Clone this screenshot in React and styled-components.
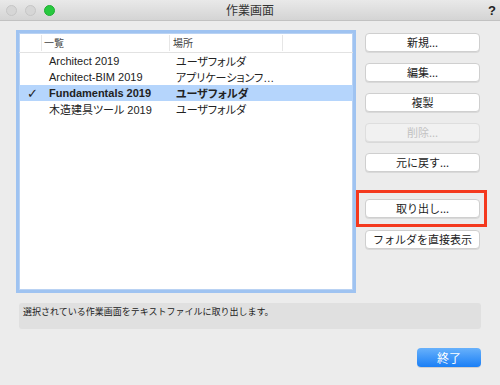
import React from 'react';
import styled, { createGlobalStyle } from 'styled-components';

const GlobalStyle = createGlobalStyle`
  html, body {
    margin: 0;
    padding: 0;
    background: #ececec;
  }
  body {
    font-family: 'Liberation Sans', 'Noto Sans CJK JP', sans-serif;
    color: #222;
  }
`;

const workspaces = [
  { name: 'Architect 2019', place: 'ユーザフォルダ' },
  { name: 'Architect-BIM 2019', place: 'アプリケーションフ…' },
  { name: 'Fundamentals 2019', place: 'ユーザフォルダ', selected: true },
  { name: '木造建具ツール 2019', place: 'ユーザフォルダ' },
];

const actions = [
  { label: '新規...' },
  { label: '編集...' },
  { label: '複製' },
  { label: '削除...', disabled: true },
  { label: '元に戻す...' },
];

const App = () => {
  return (
    <Window>
      <GlobalStyle />
      <TitleBar>
        <Lights>
          <Light />
          <Light />
          <Light color="#27c93f" border="#1fae33" />
        </Lights>
        <Title>作業画面</Title>
        <Help>?</Help>
      </TitleBar>

      <Body>
        <MainRow>
          <List>
            <HeaderRow>
              <CheckCell header />
              <NameCell header>一覧</NameCell>
              <PlaceCell header>場所</PlaceCell>
              <RestCell />
            </HeaderRow>
            {workspaces.map((item) => (
              <Row key={item.name} selected={item.selected}>
                <CheckCell>{item.selected ? '✓' : ''}</CheckCell>
                <NameCell>{item.name}</NameCell>
                <PlaceCell>{item.place}</PlaceCell>
              </Row>
            ))}
          </List>

          <Actions>
            {actions.map((a) => (
              <Button key={a.label} disabled={a.disabled}>
                {a.label}
              </Button>
            ))}
            <Highlight>
              <Button>取り出し...</Button>
            </Highlight>
            <Button>フォルダを直接表示</Button>
          </Actions>
        </MainRow>

        <Description>選択されている作業画面をテキストファイルに取り出します。</Description>

        <Footer>
          <PrimaryButton>終了</PrimaryButton>
        </Footer>
      </Body>
    </Window>
  );
};

export default App;

const Window = styled.div`
  width: 500px;
  height: 385px;
  display: flex;
  flex-direction: column;
  background: #ececec;
  overflow: hidden;
`;

const TitleBar = styled.div`
  height: 21px;
  flex: 0 0 21px;
  box-sizing: border-box;
  display: flex;
  align-items: center;
  position: relative;
  background: linear-gradient(#e9e9e9, #d4d4d4);
  border-bottom: 1px solid #c2c2c2;
`;

const Lights = styled.div`
  display: flex;
  gap: 8px;
  padding-left: 6px;
`;

const Light = styled.span`
  width: 11px;
  height: 11px;
  border-radius: 50%;
  box-sizing: border-box;
  background: ${(p) => p.color || '#d6d6d6'};
  border: 1px solid ${(p) => p.border || '#c6c6c6'};
`;

const Title = styled.div`
  position: absolute;
  left: 0;
  right: 0;
  text-align: center;
  font-family: 'Noto Sans CJK JP', sans-serif;
  font-size: 12px;
  line-height: 20px;
  color: #333;
  pointer-events: none;
`;

const Help = styled.div`
  margin-left: auto;
  margin-right: 4px;
  font-family: 'Liberation Sans', sans-serif;
  font-weight: bold;
  font-size: 13px;
  color: #222;
`;

const Body = styled.div`
  flex: 1;
  display: flex;
  flex-direction: column;
  padding: 9px 20px 0 16px;
`;

const MainRow = styled.div`
  display: flex;
  gap: 9px;
`;

const List = styled.div`
  width: 340px;
  height: 263px;
  box-sizing: border-box;
  background: #fff;
  border: 3px solid #9fc3f1;
  box-shadow: inset 0 0 0 1px #b9d2f3;
  display: flex;
  flex-direction: column;
`;

const HeaderRow = styled.div`
  height: 20px;
  flex: 0 0 20px;
  display: flex;
  align-items: stretch;
  border-bottom: 1px solid #e2e2e2;
  box-sizing: border-box;
`;

const Row = styled.div`
  height: 16px;
  display: flex;
  align-items: center;
  background: ${(p) => (p.selected ? '#b5d5fc' : 'transparent')};
  font-weight: ${(p) => (p.selected ? 'bold' : 'normal')};
  font-size: 11px;
  font-feature-settings: 'palt';
`;

const Cell = styled.div`
  box-sizing: border-box;
  display: flex;
  align-items: center;
  white-space: nowrap;
  overflow: hidden;
  height: 100%;
`;

const CheckCell = styled(Cell)`
  width: 23px;
  justify-content: flex-end;
  padding-right: 4px;
  font-family: 'DejaVu Sans', sans-serif;
  font-size: 13px;
  font-weight: bold;
  ${(p) => p.header && 'border-right: 1px solid #e6e6e6; height: 16px; align-self: center;'}
`;

const NameCell = styled(Cell)`
  width: 128px;
  padding-left: ${(p) => (p.header ? '2px' : '7px')};
  ${(p) =>
    p.header &&
    'border-right: 1px solid #e6e6e6; height: 16px; align-self: center; font-size: 10px; color: #444; font-family: "Noto Sans CJK JP", sans-serif;'}
`;

const PlaceCell = styled(Cell)`
  width: 113px;
  padding-left: ${(p) => (p.header ? '3px' : '6px')};
  ${(p) =>
    p.header &&
    'border-right: 1px solid #e6e6e6; height: 16px; align-self: center; font-size: 10px; color: #444; font-family: "Noto Sans CJK JP", sans-serif;'}
`;

const RestCell = styled(Cell)`
  flex: 1;
`;

const Actions = styled.div`
  width: 115px;
  padding-top: 3px;
  display: flex;
  flex-direction: column;
  gap: 11px;
`;

const Button = styled.button`
  height: 19px;
  width: 100%;
  padding: 0;
  box-sizing: border-box;
  border: 1px solid ${(p) => (p.disabled ? '#dedede' : '#cfcfcf')};
  border-radius: 4px;
  background: ${(p) => (p.disabled ? '#f1f1f1' : '#fff')};
  box-shadow: 0 1px 0 rgba(0, 0, 0, 0.08);
  color: ${(p) => (p.disabled ? '#c2c2c2' : '#222')};
  font-family: 'Noto Sans CJK JP', sans-serif;
  font-size: 11px;
  line-height: 17px;
`;

const Highlight = styled.div`
  margin: 7px -7px -8px -9px;
  padding: 6px 4px 6px 6px;
  border: 3px solid #f4391e;
`;

const Description = styled.div`
  margin: 10px -1px 0 3px;
  height: 26px;
  box-sizing: border-box;
  padding: 3px 4px;
  background: #e0e0e0;
  border-radius: 3px;
  font-family: 'Noto Sans CJK JP', sans-serif;
  font-size: 9px;
  line-height: 12px;
  color: #222;
`;

const Footer = styled.div`
  display: flex;
  justify-content: flex-end;
  margin-top: 19px;
  margin-right: -1px;
`;

const PrimaryButton = styled.button`
  width: 64px;
  height: 19px;
  padding: 0;
  border: none;
  border-radius: 4px;
  background: linear-gradient(#68b1fb, #1a7ff6);
  box-shadow: 0 1px 0 rgba(0, 0, 0, 0.12);
  color: #fff;
  font-family: 'Noto Sans CJK JP', sans-serif;
  font-size: 12px;
  line-height: 19px;
`;
